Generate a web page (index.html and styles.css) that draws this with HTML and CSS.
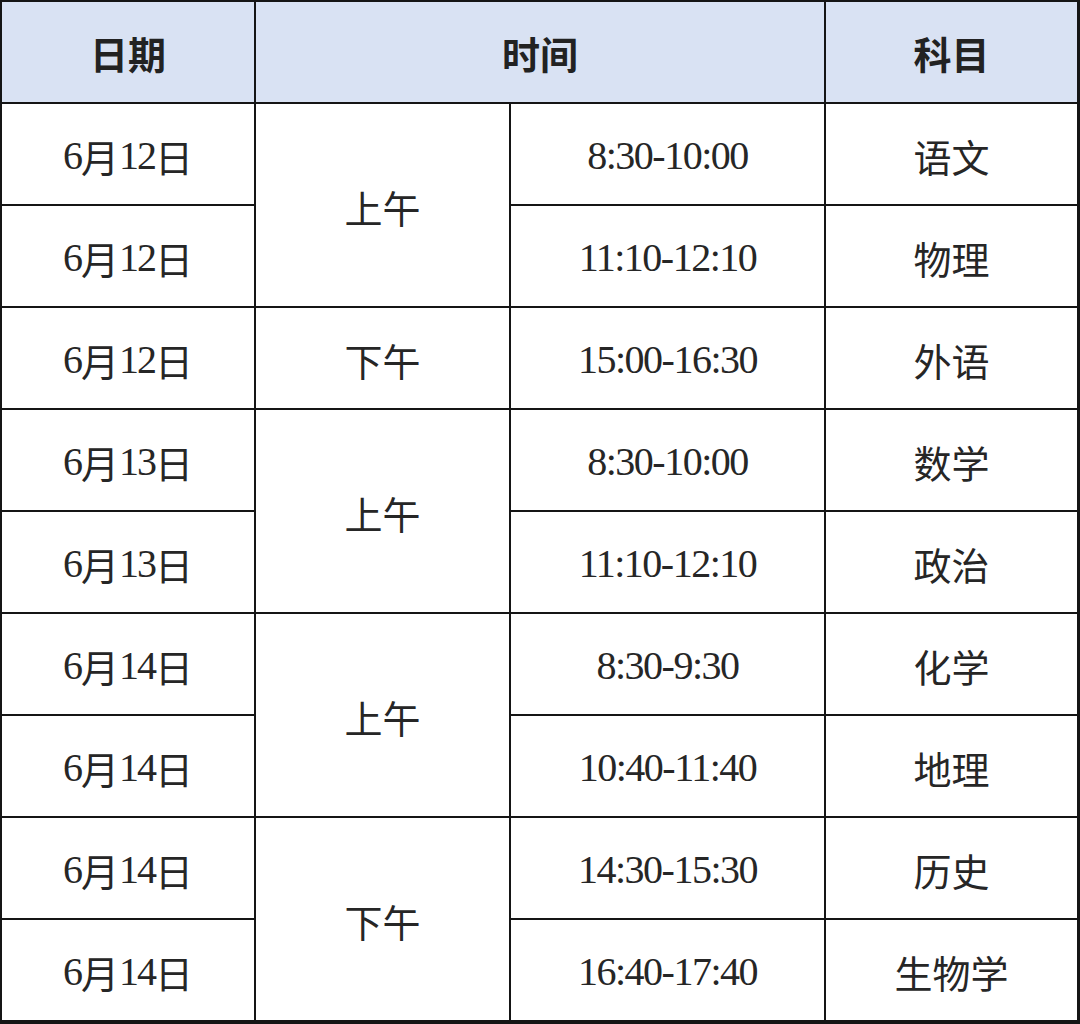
FILE: index.html
```html
<!DOCTYPE html>
<html lang="zh-CN">
<head>
<meta charset="utf-8">
<title>考试安排</title>
<link rel="stylesheet" href="styles.css">
</head>
<body>
<div class="table">
  <div class="cell head">日期</div>
  <div class="cell head span-cols">时间</div>
  <div class="cell head">科目</div>

  <div class="cell r1 c1"><span class="num">6</span>月<span class="num">12</span>日</div>
  <div class="cell r1 c2 rs2">上午</div>
  <div class="cell r1 c3 num">8:30-10:00</div>
  <div class="cell r1 c4">语文</div>

  <div class="cell r2 c1"><span class="num">6</span>月<span class="num">12</span>日</div>
  <div class="cell r2 c3 num">11:10-12:10</div>
  <div class="cell r2 c4">物理</div>

  <div class="cell r3 c1"><span class="num">6</span>月<span class="num">12</span>日</div>
  <div class="cell r3 c2">下午</div>
  <div class="cell r3 c3 num">15:00-16:30</div>
  <div class="cell r3 c4">外语</div>

  <div class="cell r4 c1"><span class="num">6</span>月<span class="num">13</span>日</div>
  <div class="cell r4 c2 rs2">上午</div>
  <div class="cell r4 c3 num">8:30-10:00</div>
  <div class="cell r4 c4">数学</div>

  <div class="cell r5 c1"><span class="num">6</span>月<span class="num">13</span>日</div>
  <div class="cell r5 c3 num">11:10-12:10</div>
  <div class="cell r5 c4">政治</div>

  <div class="cell r6 c1"><span class="num">6</span>月<span class="num">14</span>日</div>
  <div class="cell r6 c2 rs2">上午</div>
  <div class="cell r6 c3 num">8:30-9:30</div>
  <div class="cell r6 c4">化学</div>

  <div class="cell r7 c1"><span class="num">6</span>月<span class="num">14</span>日</div>
  <div class="cell r7 c3 num">10:40-11:40</div>
  <div class="cell r7 c4">地理</div>

  <div class="cell r8 c1"><span class="num">6</span>月<span class="num">14</span>日</div>
  <div class="cell r8 c2 rs2">下午</div>
  <div class="cell r8 c3 num">14:30-15:30</div>
  <div class="cell r8 c4">历史</div>

  <div class="cell r9 c1"><span class="num">6</span>月<span class="num">14</span>日</div>
  <div class="cell r9 c3 num">16:40-17:40</div>
  <div class="cell r9 c4">生物学</div>
</div>
</body>
</html>
```
FILE: styles.css
```css
html, body {
  margin: 0;
  padding: 0;
  background: #ffffff;
}

.table {
  box-sizing: border-box;
  width: 1080px;
  height: 1024px;
  padding: 2px 3px 4px 2px;
  background: #151515;
  display: grid;
  grid-template-columns: 252px 253px 313px 251px;
  grid-template-rows: 100px repeat(9, 100px);
  gap: 2px;
  font-family: "Liberation Serif", "Noto Sans CJK SC", serif;
  font-size: 38px;
  color: #262626;
}

.cell {
  background: #ffffff;
  display: flex;
  align-items: center;
  justify-content: center;
  padding-top: 2px;
  box-sizing: border-box;
  white-space: nowrap;
}

.head {
  background: #d9e2f3;
  font-weight: bold;
  font-family: "Noto Sans CJK SC", sans-serif;
  color: #222222;
  padding-top: 0;
}

.span-cols {
  grid-column: 2 / span 2;
}

.c1 { grid-column: 1; }
.c2 { grid-column: 2; }
.c3 { grid-column: 3; }
.c4 { grid-column: 4; }

.r1 { grid-row: 2; }
.r2 { grid-row: 3; }
.r3 { grid-row: 4; }
.r4 { grid-row: 5; }
.r5 { grid-row: 6; }
.r6 { grid-row: 7; }
.r7 { grid-row: 8; }
.r8 { grid-row: 9; }
.r9 { grid-row: 10; }

.rs2 {
  grid-row-end: span 2;
}

.num {
  font-family: "Liberation Serif", serif;
  font-size: 40px;
  letter-spacing: -1.5px;
}

.c1 .num {
  letter-spacing: -2px;
}
```
